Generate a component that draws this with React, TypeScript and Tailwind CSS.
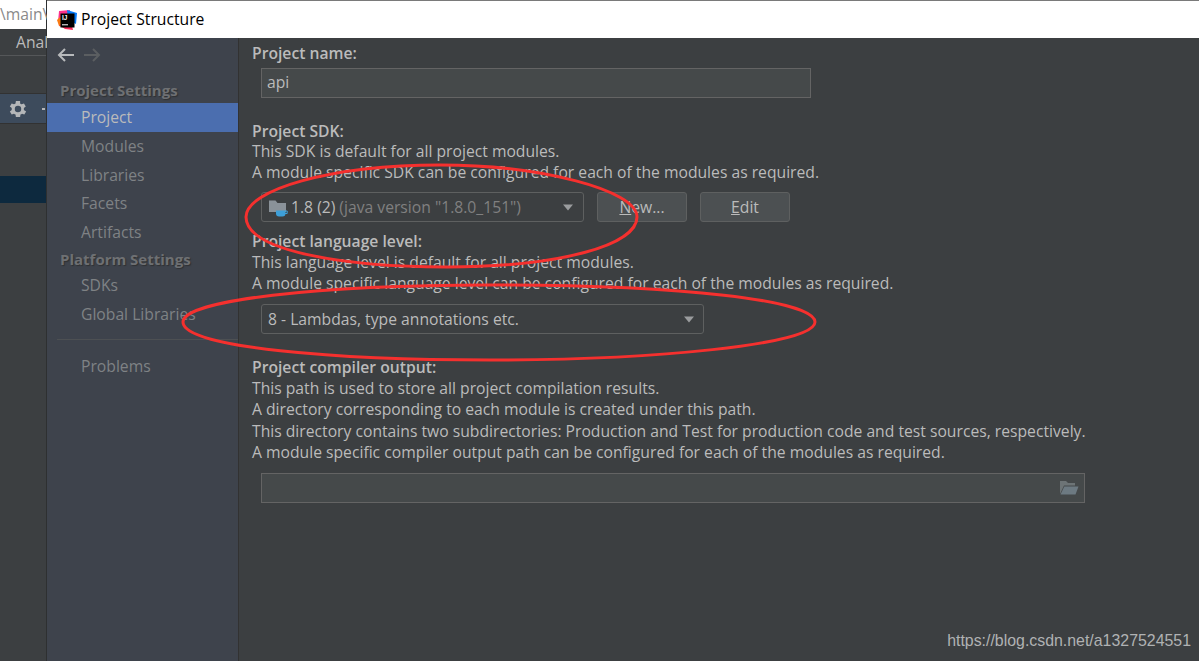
import React from "react";

const font = { fontFamily: '"Open Sans", "Noto Sans", sans-serif' };

function Desc({ children }: { children: React.ReactNode }) {
  return <div className="h-[21.3px] leading-[21.3px] text-[#bbbbbb] whitespace-nowrap">{children}</div>;
}

function Head({ children }: { children: React.ReactNode }) {
  return <div className="h-[20px] leading-[20px] font-semibold text-[#bbbbbb] whitespace-nowrap">{children}</div>;
}

function NavItem({ label, active }: { label: string; active?: boolean }) {
  return (
    <div className={`h-[28.8px] leading-[28.8px] pl-[34px] whitespace-nowrap ${active ? "bg-[#4b6eaf] text-[#bbbbbb]" : "text-[#7f8285]"}`}>
      {label}
    </div>
  );
}

function NavHead({ label, tall }: { label: string; tall?: boolean }) {
  return (
    <div className={`${tall ? "h-[25px] leading-[25px]" : "h-[24px] leading-[24px]"} pl-[13px] text-[15px] font-bold text-[#6e7073] whitespace-nowrap [text-shadow:1px_1px_1px_#2f3133]`}>
      {label}
    </div>
  );
}

function Caret() {
  return (
    <svg width="12" height="7" viewBox="0 0 12 7" className="shrink-0">
      <path d="M1 0.5h10L6 6.5z" fill="#9a9c9e" />
    </svg>
  );
}

function IdeaLogo() {
  return (
    <svg width="20" height="20" viewBox="0 0 20 20" className="shrink-0">
      <path d="M2 1 L13 0 L11 10 L1 12z" fill="#fc318c" />
      <path d="M0 10 L6 4 L8 18 L2 16z" fill="#f97a12" />
      <path d="M10 0 L20 3 L19 14 L11 10z" fill="#087cfa" />
      <path d="M8 19 L2 15 L14 12 L16 20z" fill="#fe2857" />
      <rect x="3.500" y="3.500" width="14" height="14" fill="#000" />
      <text x="5" y="10.400" fontSize="6.500" fontWeight="700" fill="#fff" fontFamily="Liberation Sans, sans-serif">IJ</text>
      <rect x="5" y="14.300" width="6" height="1" fill="#fff" />
    </svg>
  );
}

function JdkFolder() {
  return (
    <svg width="20" height="20" viewBox="0 0 20 20" className="shrink-0">
      <path d="M1 2.500h6.500l2 2.500H18v9H1z" fill="#8a9299" />
      <path d="M8 12.500h9.500v3a3 3 0 0 1-3 3h-3.500a3 3 0 0 1-3-3z" fill="#3d9fd8" />
      <path d="M17 13h2.200v2.500H17" fill="none" stroke="#3d9fd8" strokeWidth="1" />
    </svg>
  );
}

function OpenFolder() {
  return (
    <svg width="20" height="15" viewBox="0 0 20 15" className="shrink-0">
      <path d="M1 14V1h6l2 2h7v2.500H5z" fill="#6d7476" />
      <path d="M1.500 14.500L5.300 6.500H19.500L16.500 14.500z" fill="#6d7a82" />
    </svg>
  );
}

export default function App() {
  return (
    <div className="relative flex w-[1199px] h-[661px] overflow-hidden bg-[#3c3f41] text-[15.7px]" style={font}>
      {/* Window behind the dialog */}
      <div className="w-[47px] shrink-0 flex flex-col bg-[#3c3f41] text-[#bbbbbb] border-r border-[#2e3031]">
        <div className="h-[29px] shrink-0 bg-white text-[#8a8a8a] leading-[29px] whitespace-nowrap">\main\</div>
        <div className="h-[27px] shrink-0 leading-[27px] pl-[16px] whitespace-nowrap border-b border-[#555759]">Anal</div>
        <div className="h-[37px] shrink-0" />
        <div className="h-[31px] shrink-0 flex items-center pl-[7px] gap-[13px] bg-[#3d4b5c] border-y border-[#323232]">
          <svg width="22" height="22" viewBox="1 0 24 24" className="shrink-0" fill="#b4b6b8">
            <path fillRule="evenodd" d="M19.400 13a7.500 7.500 0 0 0 0-2l2.100-1.600-2-3.500-2.500 1a7.500 7.500 0 0 0-1.700-1L15.300 3.300h-4.600l-.4 2.600a7.500 7.500 0 0 0-1.700 1l-2.500-1-2 3.500L6.200 11a7.500 7.500 0 0 0 0 2l-2.100 1.600 2 3.500 2.500-1a7.500 7.500 0 0 0 1.700 1l.4 2.600h4.600l.4-2.600a7.500 7.500 0 0 0 1.700-1l2.500 1 2-3.500zM13 15.500a3.500 3.500 0 1 1 0-7 3.500 3.500 0 0 1 0 7z" />
          </svg>
          <div className="w-[3px] h-[2px] bg-[#b4b6b8] shrink-0" />
        </div>
        <div className="h-[52px] shrink-0" />
        <div className="h-[27px] shrink-0 bg-[#0d293e]" />
      </div>

      {/* Dialog */}
      <div className="flex-1 min-w-0 flex flex-col border-t border-[#7a7a7a]">
        <div className="h-[37px] shrink-0 bg-white flex items-center pl-[10px] gap-[4px] text-black whitespace-nowrap">
          <IdeaLogo />
          <span>Project Structure</span>
        </div>
        <div className="flex-1 min-h-0 flex">
          {/* Sidebar */}
          <div className="w-[192px] shrink-0 bg-[#3e434c] border-r border-[#323232] flex flex-col">
            <div className="h-[40px] shrink-0 flex items-center pl-[10px] gap-[8px] pb-[6px]">
              <svg width="18" height="14" viewBox="0 0 18 14" fill="none" stroke="#b8babc" strokeWidth="2">
                <path d="M17 7H2M8 1L2 7l6 6" />
              </svg>
              <svg width="18" height="14" viewBox="0 0 18 14" fill="none" stroke="#5b5e61" strokeWidth="2">
                <path d="M1 7h15M10 1l6 6-6 6" />
              </svg>
            </div>
            <NavHead label="Project Settings" tall />
            <NavItem label="Project" active />
            <NavItem label="Modules" />
            <NavItem label="Libraries" />
            <NavItem label="Facets" />
            <NavItem label="Artifacts" />
            <NavHead label="Platform Settings" />
            <NavItem label="SDKs" />
            <NavItem label="Global Libraries" />
            <div className="mt-[10.400px] mb-[12px] ml-[10px] h-px bg-[#4d5053]" />
            <NavItem label="Problems" />
          </div>

          {/* Main */}
          <div className="flex-1 min-w-0 pl-[13px] pt-[5px] flex flex-col">
            <Head>Project name:</Head>
            <div className="ml-[9px] mt-[5px] w-[550px] h-[30px] shrink-0 bg-[#45494a] border border-[#646464] pl-[5px] leading-[27px] text-[#bbbbbb]">api</div>

            <div className="mt-[23px]"><Head>Project SDK:</Head></div>
            <Desc>This SDK is default for all project modules.</Desc>
            <Desc>A module specific SDK can be configured for each of the modules as required.</Desc>

            <div className="ml-[9px] mt-[8.400px] flex gap-[13px] shrink-0">
              <div className="w-[323px] h-[30px] flex items-center pt-[2px] pl-[6px] pr-[9px] gap-[3px] bg-[#3c3f41] border border-[#5e6060] rounded-[3px] whitespace-nowrap">
                <JdkFolder />
                <span className="text-[#bbbbbb]">1.8 (2)</span>
                <span className="text-[#808080] ml-[1px]">(java version "1.8.0_151")</span>
                <span className="flex-1" />
                <Caret />
              </div>
              <div className="w-[90px] h-[30px] flex items-center justify-center pt-[2px] bg-[#4c5052] border border-[#5e6060] rounded-[3px] text-[#bbbbbb]">
                <span><span className="underline">N</span>ew...</span>
              </div>
              <div className="w-[90px] h-[30px] flex items-center justify-center pt-[2px] bg-[#4c5052] border border-[#5e6060] rounded-[3px] text-[#bbbbbb]">
                <span><span className="underline">E</span>dit</span>
              </div>
            </div>

            <div className="mt-[9px]"><Head>Project language level:</Head></div>
            <div className="mt-[1px]">
              <Desc>This language level is default for all project modules.</Desc>
              <Desc>A module specific language level can be configured for each of the modules as required.</Desc>
            </div>

            <div className="ml-[9px] mt-[9.400px] w-[443px] h-[30px] shrink-0 flex items-center pt-[2px] pl-[6px] pr-[8px] bg-[#3c3f41] border border-[#5e6060] rounded-[3px] text-[#bbbbbb] whitespace-nowrap">
              <span>8 - Lambdas, type annotations etc.</span>
              <span className="flex-1" />
              <Caret />
            </div>

            <div className="mt-[23px]"><Head>Project compiler output:</Head></div>
            <div className="mt-[1px]">
              <Desc>This path is used to store all project compilation results.</Desc>
              <Desc>A directory corresponding to each module is created under this path.</Desc>
              <Desc>This directory contains two subdirectories: Production and Test for production code and test sources, respectively.</Desc>
              <Desc>A module specific compiler output path can be configured for each of the modules as required.</Desc>
            </div>

            <div className="ml-[9px] mt-[9.800px] w-[824px] h-[30px] shrink-0 flex items-center justify-end pr-[5px] bg-[#45494a] border border-[#646464]">
              <OpenFolder />
            </div>
          </div>
        </div>
      </div>

      {/* Hand-drawn annotations */}
      <svg className="absolute inset-0 pointer-events-none" width="1199" height="661" viewBox="0 0 1199 661" fill="none" stroke="#f5302e" strokeWidth="3">
        <path d="M440 165 C540 165 637 190 637 217 C637 245 560 267 447 267 C340 267 246 250 246 217 C246 190 330 165 440 165 Z" />
        <path d="M490 285 C680 285 815 300 815 322 C815 345 650 360 490 360 C340 360 183 348 183 322 C183 300 320 285 490 285 Z" />
      </svg>

      {/* Watermark */}
      <div className="absolute right-[8px] top-[631px] text-[15.9px] leading-[20px] text-[#b0b2b3] whitespace-nowrap" style={{ fontFamily: '"Liberation Sans", sans-serif' }}>
        https://blog.csdn.net/a1327524551
      </div>
    </div>
  );
}
